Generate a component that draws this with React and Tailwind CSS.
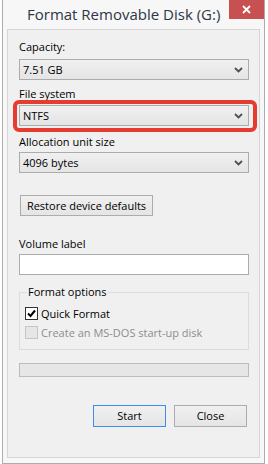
const selectStyle = "flex h-[21px] w-[230px] items-center justify-between border border-[#acacac] bg-gradient-to-b from-[#f0f0f0] to-[#e5e5e5] pl-[3px] pr-[5px] text-[11px] leading-[16px] text-black";
const labelStyle = "block h-[16px] text-[11px] leading-[16px] text-black";
const buttonStyle = "flex h-[22px] w-[73px] items-center justify-center border bg-gradient-to-b from-[#f0f0f0] to-[#e5e5e5] text-[11px] leading-[16px] text-black";

function Chevron() {
  return (
    <svg width="9" height="6" viewBox="0 0 9 6">
      <path d="M1 1 L4.5 4.5 L8 1" fill="none" stroke="#505050" strokeWidth="1.8" />
    </svg>
  );
}

function Dropdown({ value }) {
  return (
    <div className={selectStyle}>
      <span>{value}</span>
      <Chevron />
    </div>
  );
}

export default function App() {
  return (
    <div className="h-[464px] w-[268px] overflow-hidden bg-white font-['Open_Sans',sans-serif]">
      <div className="relative ml-[2px] flex h-[464px] w-[263px] flex-col border-x border-b border-[#adadad] bg-[#f7f7f7]">
        <div className="h-[29px] pl-[24px] pt-[4px] text-[15px] leading-[20px] text-[#2d3644]">
          Format Removable Disk (G:)
        </div>
        <div className="absolute right-0 top-0 flex h-[19px] w-[35px] items-center justify-center bg-[#c75050]">
          <svg width="9" height="9" viewBox="0 0 9 9">
            <path d="M1 1 L8 8 M8 1 L1 8" stroke="white" strokeWidth="1.8" />
          </svg>
        </div>

        <div className="relative ml-[4px] h-[429px] w-[253px] border border-[#d5d5d5] bg-[#f0f0f0] pl-[11px] pt-[9px]">
          <span className={labelStyle}>Capacity:</span>
          <div className="mt-[4px]">
            <Dropdown value="7.51 GB" />
          </div>

          <span className={`${labelStyle} mt-[6px]`}>File system</span>
          <div className="relative mt-[3px]">
            <Dropdown value="NTFS" />
            <div className="absolute left-[-6px] top-[-5px] h-[32px] w-[244px] rounded-[6px] border-[4px] border-[#e53b30]" />
          </div>

          <span className={`${labelStyle} mt-[8px]`}>Allocation unit size</span>
          <div className="mt-[2px]">
            <Dropdown value="4096 bytes" />
          </div>

          <button className="ml-px mt-[22px] flex h-[21px] w-[133px] items-center justify-center border border-[#acacac] bg-gradient-to-b from-[#f0f0f0] to-[#e5e5e5] text-[11px] leading-[16px] text-black">
            Restore device defaults
          </button>

          <span className={`${labelStyle} mt-[20px]`}>Volume label</span>
          <div className="mt-[2px] h-[21px] w-[230px] border border-[#acacac] bg-white" />

          <fieldset className="mt-[9px] h-[66px] w-[230px] border border-[#dcdcdc] pl-[5px]">
            <legend className="ml-[2px] px-[1px] text-[11px] leading-[16px] text-black">Format options</legend>
            <div className="mt-[4px] flex h-[19px] items-center gap-[3px] text-[11px] leading-[16px] text-black">
              <span className="flex h-[13px] w-[13px] items-center justify-center border border-[#333] bg-white">
                <svg width="11" height="11" viewBox="0 0 11 11">
                  <path d="M2 5.5 L4.5 8 L9 2.5" fill="none" stroke="black" strokeWidth="2" />
                </svg>
              </span>
              Quick Format
            </div>
            <div className="flex h-[19px] items-center gap-[3px] text-[11px] leading-[16px] text-[#8d8d8d]">
              <span className="h-[13px] w-[13px] border border-[#c6c6c6] bg-[#e6e6e6]" />
              Create an MS-DOS start-up disk
            </div>
          </fieldset>

          <div className="mt-[13px] h-[14px] w-[230px] border border-[#bcbcbc] bg-[#e6e6e6]" />

          <div className="mt-[28px] flex w-[228px] justify-end gap-[8px]">
            <button className={`${buttonStyle} border-[#3c8ee6]`}>Start</button>
            <button className={`${buttonStyle} border-[#acacac]`}>Close</button>
          </div>
        </div>
      </div>
    </div>
  );
}
